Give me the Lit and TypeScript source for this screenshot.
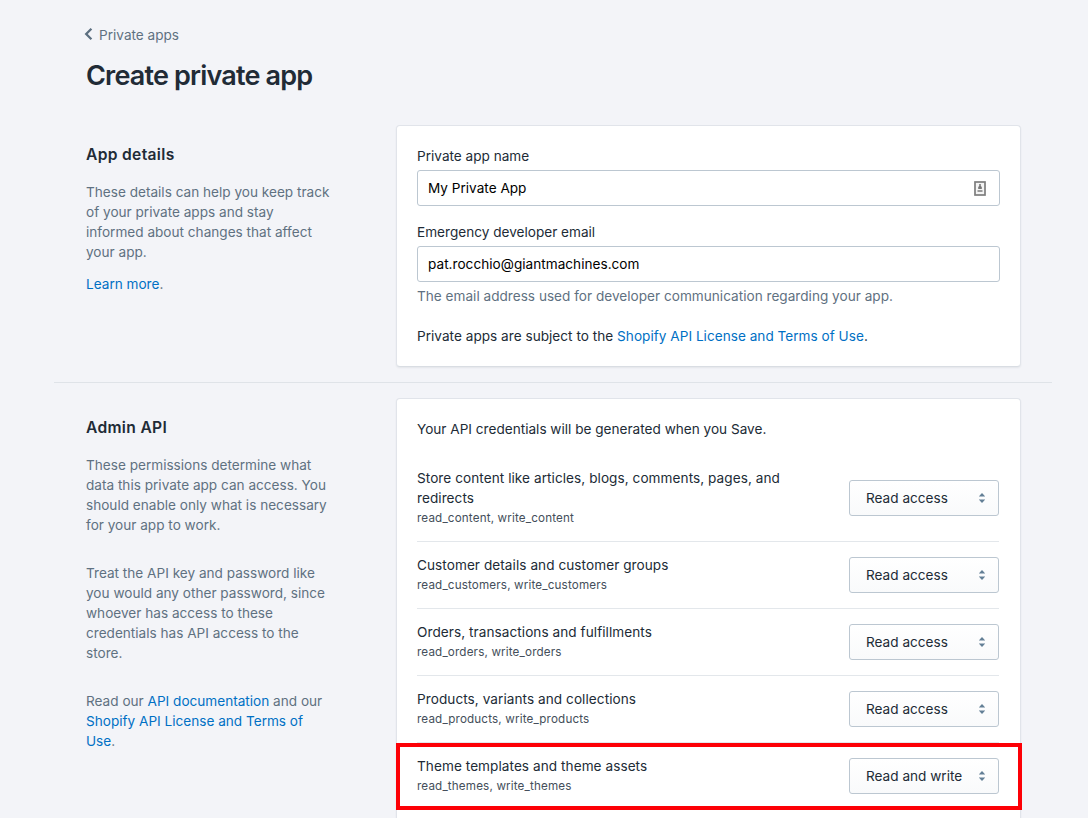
import { LitElement, html, css, svg } from "lit";
import { classMap } from "lit/directives/class-map.js";

interface Scope {
  title: unknown;
  scopes: string;
  access: string;
  highlighted?: boolean;
}

const SCOPES: Scope[] = [
  {
    title: html`Store content like articles, blogs, comments, pages, and<br />redirects`,
    scopes: "read_content, write_content",
    access: "Read access",
  },
  { title: "Customer details and customer groups", scopes: "read_customers, write_customers", access: "Read access" },
  { title: "Orders, transactions and fulfillments", scopes: "read_orders, write_orders", access: "Read access" },
  { title: "Products, variants and collections", scopes: "read_products, write_products", access: "Read access" },
  { title: "Theme templates and theme assets", scopes: "read_themes, write_themes", access: "Read and write", highlighted: true },
];

class AccessSelect extends LitElement {
  static properties = { value: { type: String } };
  declare value: string;

  static styles = css`
    :host {
      display: block;
      flex: none;
    }
    .select {
      box-sizing: border-box;
      display: flex;
      align-items: center;
      justify-content: space-between;
      width: 150px;
      height: 36px;
      padding: 0 13px 0 16px;
      border: 1px solid #bcc7d1;
      border-radius: 3px;
      background: linear-gradient(to bottom, #ffffff, #f9fafb);
      color: #212b36;
      white-space: nowrap;
    }
    .arrows {
      display: block;
      width: 6px;
      height: 10px;
      fill: #637f96;
    }
  `;

  render() {
    return html`
      <div class="select">
        <span>${this.value}</span>
        <svg class="arrows" viewBox="0 0 6 10">
          ${svg`<path d="M3 0 6 3.2v.4H0v-.4z"/><path d="M0 6.4h6v.4L3 10 0 6.8z"/>`}
        </svg>
      </div>
    `;
  }
}
customElements.define("access-select", AccessSelect);

class AppRoot extends LitElement {
  static styles = css`
    :host {
      display: block;
      box-sizing: border-box;
      height: 818px;
      overflow: hidden;
      background: #f3f4f8;
      color: #212b36;
      font: 400 13.6px/20px Inter, "Liberation Sans", sans-serif;
    }
    .page {
      box-sizing: border-box;
      width: 998px;
      margin-left: 54px;
      padding-top: 25px;
    }
    .head {
      padding-left: 30px;
    }
    .back {
      display: flex;
      align-items: center;
      height: 20px;
      color: #5f7181;
    }
    .chevron {
      display: block;
      width: 9px;
      height: 14px;
      margin: 0 6px 2px 0;
      fill: none;
      stroke: #5c6f80;
      stroke-width: 2.3;
    }
    h1 {
      margin: 13px 0 0 2px;
      font-size: 27px;
      line-height: 36px;
      letter-spacing: -0.82px;
      font-weight: 600;
    }
    .section {
      display: grid;
      grid-template-columns: 342px 625px;
      padding-bottom: 15px;
    }
    .details {
      margin-top: 31px;
    }
    .api {
      border-top: 1px solid #dfe3e8;
      padding-top: 15px;
    }
    .aside {
      padding: 18px 0 0 32px;
      color: #5f7181;
      white-space: nowrap;
    }
    h2 {
      margin: 0 0 15px;
      color: #212b36;
      font-size: 15.6px;
      line-height: 24px;
      letter-spacing: 0.33px;
      font-weight: 600;
    }
    p {
      margin: 0;
    }
    .learn {
      margin-top: 12px;
    }
    .gap {
      margin-top: 28px;
    }
    a {
      color: #0070c4;
      text-decoration: none;
    }
    .card {
      box-sizing: border-box;
      border: 1px solid #e1e4ea;
      border-bottom-color: #d9dde3;
      border-radius: 4px;
      padding: 20px;
      background: #fff;
      box-shadow: 0 1px 2px rgba(33, 43, 54, 0.07);
    }
    .details .card {
      height: 242px;
    }
    .api .card {
      height: 500px;
    }
    .field {
      box-sizing: border-box;
      display: flex;
      align-items: center;
      justify-content: space-between;
      height: 36px;
      margin: 4px 0 16px;
      padding: 0 13px 0 10px;
      border: 1px solid #bcc7d1;
      border-radius: 3px;
      color: #000;
    }
    .email {
      margin-bottom: 4px;
      letter-spacing: 0.02px;
    }
    .autofill {
      display: block;
      width: 12px;
      height: 15px;
    }
    .help {
      color: #5f7181;
      letter-spacing: 0.01px;
    }
    .terms {
      margin-top: 20px;
      letter-spacing: 0.02px;
    }
    .row {
      position: relative;
      display: flex;
      align-items: center;
      justify-content: space-between;
      margin-right: 1px;
      padding: 13px 0;
    }
    .row + .row {
      border-top: 1px solid #e3e7eb;
    }
    .intro {
      margin-bottom: 16px;
    }
    .title {
      letter-spacing: 0.06px;
    }
    .scopes {
      color: #454f5b;
      font-size: 11.65px;
      letter-spacing: 0.16px;
    }
    .highlighted::after {
      content: "";
      position: absolute;
      inset: 0 -23px -1px -21px;
      border: 4px solid #fd0006;
    }
  `;

  private renderRow(s: Scope) {
    return html`
      <div class=${classMap({ row: true, highlighted: !!s.highlighted })}>
        <div>
          <div class="title">${s.title}</div>
          <div class="scopes">${s.scopes}</div>
        </div>
        <access-select .value=${s.access}></access-select>
      </div>
    `;
  }

  render() {
    return html`
      <main class="page">
        <header class="head">
          <div class="back">
            <svg class="chevron" viewBox="0 0 9 14"><path d="M7.4 1.8 2.2 7l5.2 5.2" /></svg>
            <span>Private apps</span>
          </div>
          <h1>Create private app</h1>
        </header>

        <section class="section details">
          <div class="aside">
            <h2>App details</h2>
            <p>These details can help you keep track<br />of your private apps and stay<br />informed about changes that affect<br />your app.</p>
            <p class="learn"><a>Learn more</a>.</p>
          </div>
          <div class="card">
            <div>Private app name</div>
            <div class="field">
              <span>My Private App</span>
              <svg class="autofill" viewBox="0 0 12 15">
                <rect x="1" y="1" width="10" height="13" fill="#f4f4f4" stroke="#7d7d7d" stroke-width="1.7" />
                <path d="M5.2 3h1.6v2l1 1v2H4.2V6l1-1z" fill="#777" />
                <path d="M3.5 9h5v2h-5z" fill="#999" />
              </svg>
            </div>
            <div>Emergency developer email</div>
            <div class="field email"><span>pat.rocchio@giantmachines.com</span></div>
            <div class="help">The email address used for developer communication regarding your app.</div>
            <div class="terms">Private apps are subject to the <a>Shopify API License and Terms of Use</a>.</div>
          </div>
        </section>

        <section class="section api">
          <div class="aside">
            <h2>Admin API</h2>
            <p>These permissions determine what<br />data this private app can access. You<br />should enable only what is necessary<br />for your app to work.</p>
            <p class="gap">Treat the API key and password like<br />you would any other password, since<br />whoever has access to these<br />credentials has API access to the<br />store.</p>
            <p class="gap">Read our <a>API documentation</a> and our<br /><a>Shopify API License and Terms of<br />Use</a>.</p>
          </div>
          <div class="card">
            <div class="intro">Your API credentials will be generated when you Save.</div>
            ${SCOPES.map((s) => this.renderRow(s))}
          </div>
        </section>
      </main>
    `;
  }
}
customElements.define("app-root", AppRoot);
